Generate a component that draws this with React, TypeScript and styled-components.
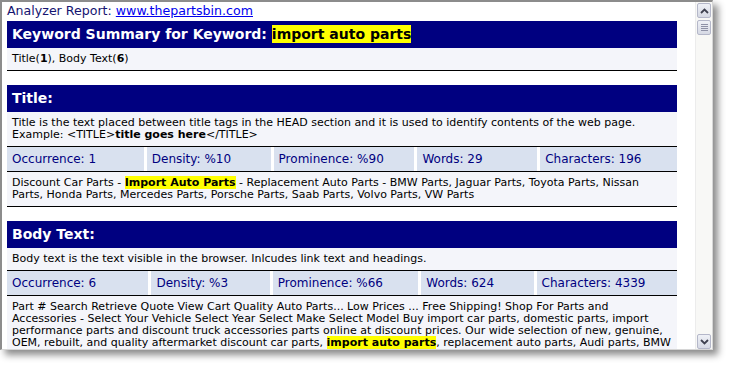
import React from "react";
import styled, { createGlobalStyle } from "styled-components";

const Global = createGlobalStyle`
  html, body { margin: 0; padding: 0; background: #ffffff; }
  body { font-family: "DejaVu Sans", Verdana, sans-serif; }
`;

const Page = styled.div`
  width: 730px;
  height: 366px;
  overflow: hidden;
  background: #fff;
`;

const Window = styled.div`
  width: 710px;
  height: 347px;
  border-top: 2px solid #8c8c8c;
  border-left: 2px solid #8c8c8c;
  border-right: 1px solid #d6d6d6;
  border-bottom: 1px solid #d6d6d6;
  box-shadow: 5px 5px 7px rgba(0, 0, 0, 0.45);
  background: #fff;
  display: flex;
  overflow: hidden;
`;

const Content = styled.div`
  flex: 1;
  padding: 0 17px 0 5px;
  overflow: hidden;
`;

const TopLine = styled.div`
  height: 17px;
  line-height: 17px;
  margin-bottom: 2px;
  font-size: 12.6px;
  color: #141470;
  white-space: nowrap;
`;

const Link = styled.a`
  color: #0000ee;
  text-decoration: underline;
`;

const Section = styled.section`
  width: 670px;
  margin-bottom: 14px;
`;

const Header = styled.div`
  height: 27px;
  line-height: 27px;
  background: #000080;
  color: #fff;
  font-weight: bold;
  font-size: 14px;
  padding-left: 5px;
  white-space: nowrap;
`;

const HeaderMark = styled.span`
  background: #ffff00;
  color: #000;
  padding: 1px 0;
`;

const TextRow = styled.div`
  background: #f4f5fa;
  padding: 5px 5px;
  font-size: 11px;
  line-height: 12px;
  color: #000;
  white-space: nowrap;
  overflow: hidden;
  border-bottom: 1px solid #000;
`;

const Mark = styled.b`
  background: #ffff00;
  color: #000;
`;

const Stats = styled.div<{ $cols: string }>`
  display: grid;
  grid-template-columns: ${(p) => p.$cols};
  column-gap: 3px;
  height: 24px;
  border-bottom: 1px solid #000;
  background: #fff;
`;

const StatCell = styled.div`
  background: #d9e1ef;
  color: #000080;
  font-size: 12px;
  line-height: 24px;
  padding-left: 5px;
  white-space: nowrap;
  overflow: hidden;
`;

const Scrollbar = styled.div`
  width: 16px;
  flex: none;
  background: #f8f8f6;
  border-left: 1px solid #ececec;
  display: flex;
  flex-direction: column;
  padding: 1px 0 0 0;
`;

const ScrollButton = styled.div`
  height: 13px;
  margin: 0 1px;
  border: 1px solid #b4b7c9;
  border-radius: 2px;
  background: linear-gradient(#eff1f7, #d6d9e4);
  display: flex;
  align-items: center;
  justify-content: center;
  flex: none;
`;

const Thumb = styled(ScrollButton)`
  margin-top: 2px;
  flex-direction: column;
  gap: 1px;
`;

const Grip = styled.span`
  display: block;
  width: 7px;
  height: 1px;
  background: #8e91a6;
`;

const Track = styled.div`
  flex: 1;
`;

const Chevron = ({ down }: { down?: boolean }) => (
  <svg width="9" height="6" viewBox="0 0 9 6">
    <polyline
      points={down ? "1,1 4.5,4.5 8,1" : "1,5 4.5,1.5 8,5"}
      fill="none"
      stroke="#3f4150"
      strokeWidth="1.8"
    />
  </svg>
);

type Stat = [string, string];

const StatsRow = ({ cols, stats }: { cols: string; stats: Stat[] }) => (
  <Stats $cols={cols}>
    {stats.map(([k, v]) => (
      <StatCell key={k}>
        {k}: {v}
      </StatCell>
    ))}
  </Stats>
);

export default function App() {
  return (
    <Page>
      <Global />
      <Window>
        <Content>
          <TopLine>
            Analyzer Report: <Link href="#">www.thepartsbin.com</Link>
          </TopLine>

          <Section>
            <Header>
              Keyword Summary for Keyword: <HeaderMark>import auto parts</HeaderMark>
            </Header>
            <TextRow>
              Title(<b>1</b>), Body Text(<b>6</b>)
            </TextRow>
          </Section>

          <Section>
            <Header>Title:</Header>
            <TextRow>
              Title is the text placed between title tags in the HEAD section and it is used to identify contents of the web page.
              <br />
              Example: &lt;TITLE&gt;<b>title goes here</b>&lt;/TITLE&gt;
            </TextRow>
            <StatsRow
              cols="137fr 124fr 141fr 120fr 137fr"
              stats={[
                ["Occurrence", "1"],
                ["Density", "%10"],
                ["Prominence", "%90"],
                ["Words", "29"],
                ["Characters", "196"],
              ]}
            />
            <TextRow>
              Discount Car Parts - <Mark>Import Auto Parts</Mark> - Replacement Auto Parts - BMW Parts, Jaguar Parts, Toyota Parts, Nissan
              <br />
              Parts, Honda Parts, Mercedes Parts, Porsche Parts, Saab Parts, Volvo Parts, VW Parts
            </TextRow>
          </Section>

          <Section>
            <Header>Body Text:</Header>
            <TextRow>Body text is the text visible in the browser. Inlcudes link text and headings.</TextRow>
            <StatsRow
              cols="141fr 118fr 145fr 112fr 140fr"
              stats={[
                ["Occurrence", "6"],
                ["Density", "%3"],
                ["Prominence", "%66"],
                ["Words", "624"],
                ["Characters", "4339"],
              ]}
            />
            <TextRow>
              Part # Search Retrieve Quote View Cart Quality Auto Parts... Low Prices ... Free Shipping! Shop For Parts and
              <br />
              Accessories - Select Your Vehicle Select Year Select Make Select Model Buy import car parts, domestic parts, import
              <br />
              performance parts and discount truck accessories parts online at discount prices. Our wide selection of new, genuine,
              <br />
              OEM, rebuilt, and quality aftermarket discount car parts, <Mark>import auto parts</Mark>, replacement auto parts, Audi parts, BMW
            </TextRow>
          </Section>
        </Content>
        <Scrollbar>
          <ScrollButton>
            <Chevron />
          </ScrollButton>
          <Thumb>
            <Grip />
            <Grip />
            <Grip />
            <Grip />
          </Thumb>
          <Track />
          <ScrollButton>
            <Chevron down />
          </ScrollButton>
        </Scrollbar>
      </Window>
    </Page>
  );
}
